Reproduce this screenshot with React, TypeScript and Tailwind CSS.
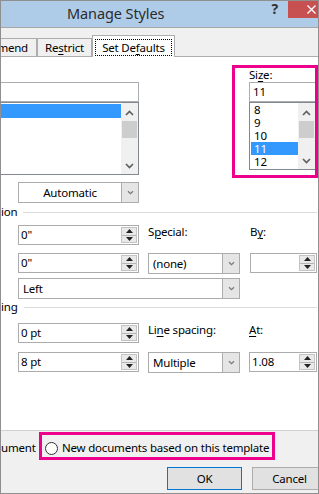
import React from 'react';

const ff = "font-['Segoe_UI','Noto_Sans',sans-serif]";

function Chevron({ up, small }: { up?: boolean; small?: boolean }) {
  if (small) {
    return (
      <svg width="7" height="5" viewBox="0 0 7 5">
        <path d="M1 1.2 3.5 3.7 6 1.2" fill="none" stroke="#7a7a7a" strokeWidth="1.3" />
      </svg>
    );
  }
  return (
    <svg width="9" height="6" viewBox="0 0 9 6">
      <path d={up ? 'M1 5 4.5 1.5 8 5' : 'M1 1 4.5 4.5 8 1'} fill="none" stroke="#606060" strokeWidth="1.7" />
    </svg>
  );
}

function ScrollBar({ downH }: { downH: number }) {
  return (
    <div className="flex w-[17px] flex-col bg-[#f0f0f0]">
      <div className="flex h-[18px] items-center justify-center pt-[2px]">
        <Chevron up />
      </div>
      <div className="mx-px h-[17px] bg-[#cdcdcd]" />
      <div className="flex-1" />
      <div className="flex items-center justify-center" style={{ height: downH }}>
        <Chevron />
      </div>
    </div>
  );
}

function SpinButtons() {
  return (
    <div className="my-px mr-px flex w-[16px] flex-col border border-[#c4c4c4] bg-[#e9e9e9]">
      <div className="flex flex-1 items-center justify-center border-b border-[#b5b5b5]">
        <svg width="7" height="4" viewBox="0 0 7 4">
          <path d="M3.5 0 7 4H0z" fill="#222" />
        </svg>
      </div>
      <div className="flex flex-1 items-center justify-center">
        <svg width="7" height="4" viewBox="0 0 7 4">
          <path d="M0 0h7L3.5 4z" fill="#222" />
        </svg>
      </div>
    </div>
  );
}

function SpinField({ value, width }: { value: string; width: string }) {
  return (
    <div className={`flex h-[20px] border border-[#acacac] bg-white ${width}`}>
      <div className="flex-1 pl-[2px] leading-[18px]">{value}</div>
      <SpinButtons />
    </div>
  );
}

function Dropdown({ value, width, center }: { value: string; width: string; center?: boolean }) {
  return (
    <div className={`flex h-[21px] border border-[#acacac] bg-white ${width}`}>
      <div className={`flex-1 leading-[19px] ${center ? 'text-center' : 'pl-[4px]'}`}>{value}</div>
      <div className="flex w-[17px] items-center justify-center border-l border-[#acacac] bg-[#e5e5e5]">
        <Chevron small />
      </div>
    </div>
  );
}

function SectionHeader({ text }: { text: string }) {
  return (
    <div className="flex h-[14px] items-center pr-px">
      <span className="leading-[14px]">{text}</span>
      <div className="ml-[6px] h-px flex-1 bg-[#dcdcdc]" />
    </div>
  );
}

function TitleBar() {
  return (
    <div className="flex h-[27px] shrink-0 items-start border-b border-[#a6a6a6] bg-[#aecbe8]">
      <div className="pl-[66px] pt-[3px] text-[14.5px] leading-[18px] tracking-[-0.1px] text-[#2b2b2b]">
        Manage Styles
      </div>
      <div className="ml-auto mr-[10px] pt-[1px] text-[14px] font-bold leading-[14px] text-[#333]">?</div>
      <div className="flex h-[17px] w-[30px] items-center justify-end bg-[#c75050] pr-[2px]">
        <svg width="9" height="9" viewBox="0 0 9 9">
          <path d="M0.5 0.5 8.5 8.5M8.5 0.5 0.5 8.5" stroke="#fff" strokeWidth="1.3" />
        </svg>
      </div>
    </div>
  );
}

function Tabs() {
  return (
    <div className="flex h-[29px] shrink-0 items-end border-b border-[#adadad] bg-[#f0f0f0]">
      <div className="flex h-[18px] w-[36px] items-center justify-end overflow-hidden border-t border-r border-[#adadad] pr-[8px]">
        mend
      </div>
      <div className="flex h-[18px] w-[55px] items-center justify-center border-x border-t border-[#adadad]">
        Re<u className="underline-offset-2">s</u>trict
      </div>
      <div className="-mb-px flex h-[22px] w-[83px] items-start justify-center border-x border-t border-[#adadad] bg-white pt-[3px]">
        <span className="flex h-[17px] w-[77px] items-center justify-center border border-dotted border-black">
          Set De<u className="underline-offset-2">f</u>aults
        </span>
      </div>
    </div>
  );
}

function Content() {
  const sizes = ['8', '9', '10', '11', '12'];
  return (
    <div className="flex flex-1 flex-col bg-white">
      <div className="mt-[8px] flex h-[113px]">
        <div className="w-[138px] pt-[17px]">
          <div className="h-[20px] border-y border-r border-[#abadb3] bg-white" />
          <div className="flex h-[73px] border-y border-r border-[#828790]">
            <div className="flex-1 pt-px">
              <div className="h-[14px] bg-[#3399ff]" />
            </div>
            <ScrollBar downH={17} />
          </div>
        </div>
        <div className="relative ml-auto w-[86px] overflow-hidden pl-[17px] pt-[3px]">
          <div className="h-[14px] leading-[14px]">
            Si<u className="underline-offset-2">z</u>e:
          </div>
          <div className="h-[20px] w-[70px] border border-[#abadb3] pl-[3px] leading-[18px]">11</div>
          <div className="flex h-[68px] w-[67px] border border-[#828790]">
            <div className="flex-1 pl-px">
              {sizes.map((s) => (
                <div
                  key={s}
                  className={`flex h-[13px] items-center pl-[3px] leading-[12px] ${s === '11' ? 'bg-[#3399ff] text-white' : ''}`}
                >
                  {s}
                </div>
              ))}
            </div>
            <ScrollBar downH={16} />
          </div>
          <div className="pointer-events-none absolute inset-0 border-[3px] border-[#ec008c]" />
        </div>
      </div>

      <div className="mt-[4px] pl-[17px]">
        <Dropdown value="Automatic" width="w-[121px]" center />
      </div>

      <div className="mt-[2px]">
        <SectionHeader text="ion" />
      </div>

      <div className="mt-[6px] flex pl-[17px]">
        <SpinField value={'0"'} width="w-[121px]" />
        <div className="ml-[9px] w-[92px] leading-[14px]">
          S<u className="underline-offset-2">p</u>ecial:
        </div>
        <div className="ml-[10px] w-[67px] leading-[14px]">
          B<u className="underline-offset-2">y</u>:
        </div>
      </div>

      <div className="mt-[8px] flex items-start pl-[17px]">
        <SpinField value={'0"'} width="w-[121px]" />
        <div className="ml-[9px]">
          <Dropdown value="(none)" width="w-[92px]" />
        </div>
        <div className="ml-[10px]">
          <SpinField value="" width="w-[67px]" />
        </div>
      </div>

      <div className="mt-[4px] pl-[17px]">
        <Dropdown value="Left" width="w-[222px]" />
      </div>

      <div className="mt-px">
        <SectionHeader text="ing" />
      </div>

      <div className="mt-[9px] flex pl-[17px]">
        <SpinField value="0 pt" width="w-[121px]" />
        <div className="ml-[9px] w-[92px] leading-[14px]">
          Li<u className="underline-offset-2">n</u>e spacing:
        </div>
        <div className="ml-[9px] w-[67px] leading-[14px]">
          <u className="underline-offset-2">A</u>t:
        </div>
      </div>

      <div className="mt-[9px] flex items-start pl-[17px]">
        <SpinField value="8 pt" width="w-[121px]" />
        <div className="ml-[9px]">
          <Dropdown value="Multiple" width="w-[92px]" />
        </div>
        <div className="ml-[9px]">
          <SpinField value="1.08" width="w-[68px]" />
        </div>
      </div>
    </div>
  );
}

function Footer() {
  return (
    <div className="flex h-[63px] shrink-0 flex-col border-t border-[#d0d0d0] bg-[#f0f0f0]">
      <div className="flex items-start pt-px">
        <div className="w-[38px] overflow-hidden whitespace-nowrap pr-[5px] pt-[9px] text-right leading-[14px]">ument</div>
        <div className="flex h-[28px] w-[236px] items-start border-[3px] border-[#ec008c] pl-[3px] pt-[6px]">
          <span className="mt-px h-[13px] w-[13px] shrink-0 rounded-full border border-[#333] bg-white" />
          <span className="ml-[4px] whitespace-nowrap leading-[14px]">New documents based on this template</span>
        </div>
      </div>
      <div className="mt-[7px] flex pl-[166px]">
        <div className="flex h-[23px] w-[75px] shrink-0 items-center justify-center border border-[#0078d7] bg-[#e1e1e1]">
          OK
        </div>
        <div className="ml-[10px] flex h-[23px] w-[75px] shrink-0 items-center justify-center border border-[#adadad] bg-[#e1e1e1]">
          Cancel
        </div>
      </div>
    </div>
  );
}

export default function App() {
  return (
    <div
      className={`h-[494px] w-[319px] overflow-hidden bg-white text-[11.5px] tracking-[-0.2px] text-black ${ff}`}
    >
      <div className="flex h-full w-full flex-col overflow-hidden border border-[#8f8f8f]">
        <TitleBar />
        <Tabs />
        <Content />
        <Footer />
      </div>
    </div>
  );
}
